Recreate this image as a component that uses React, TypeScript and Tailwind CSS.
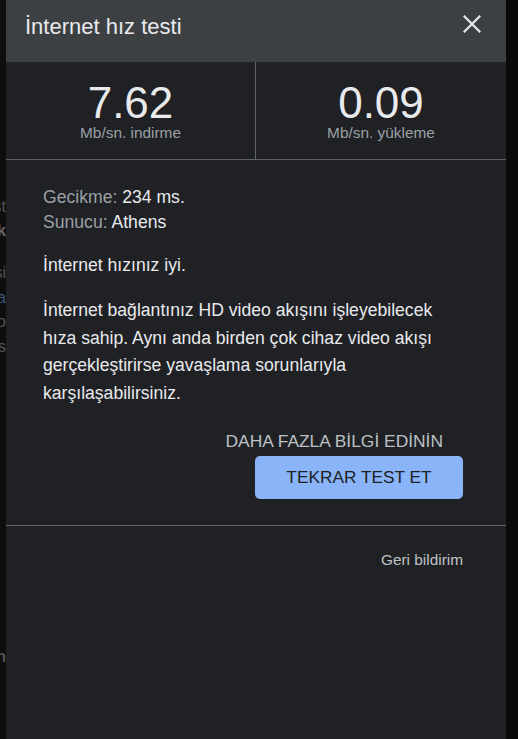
import React from "react";

const font = { fontFamily: '"Liberation Sans", Arial, sans-serif' };

function CloseIcon() {
  return (
    <svg width="18" height="18" viewBox="0 0 18 18" className="mt-[2px] shrink-0">
      <path d="M1.5 1.5 L16.5 16.5 M16.5 1.5 L1.5 16.5" stroke="#e8eaed" strokeWidth="2.2" strokeLinecap="square" />
    </svg>
  );
}

function Stat({ value, label, divider }: { value: string; label: string; divider?: boolean }) {
  return (
    <div className={`w-1/2 flex flex-col items-center pt-[19px] ${divider ? "border-r border-[#5f6368]" : ""}`}>
      <div className="text-[44px] leading-[44px] text-[#e8eaed]">{value}</div>
      <div className="text-[15.4px] leading-[15px] text-[#9aa0a6]">{label}</div>
    </div>
  );
}

export default function App() {
  return (
    <div className="flex h-[739px] w-[518px] overflow-hidden bg-[#0e0e0f]" style={font}>
      {/* page behind the dialog, only the cut-off edge shows */}
      <div className="w-[6px] shrink-0 overflow-hidden text-[16px] text-[#505357]">
        <div className="flex flex-col items-end pt-[195px] leading-[24px]">
          <div className="h-[24px] whitespace-nowrap">st</div>
          <div className="h-[42px] whitespace-nowrap font-bold text-[#64676a]">ok</div>
          <div className="h-[25px] whitespace-nowrap">desi</div>
          <div className="h-[24px] whitespace-nowrap text-[#3e5577]">ıkta</div>
          <div className="h-[25px] whitespace-nowrap">bo</div>
          <div className="h-[24px] whitespace-nowrap">ras</div>
          <div className="mt-[286px] h-[24px] whitespace-nowrap font-bold">an</div>
        </div>
      </div>

      <div className="flex w-[500px] shrink-0 flex-col bg-[#202124]">
        <div className="flex h-[62px] items-start justify-between bg-[#3c4043] pl-[19px] pr-[25px] pt-[13px]">
          <div className="text-[22px] leading-[28px] text-[#e8eaed]">İnternet hız testi</div>
          <CloseIcon />
        </div>

        <div className="flex h-[98px] border-b border-[#5f6368]">
          <Stat value="7.62" label="Mb/sn. indirme" divider />
          <Stat value="0.09" label="Mb/sn. yükleme" />
        </div>

        <div className="flex flex-col border-b border-[#5f6368] pb-[26px] pl-[37px] pr-[43px] pt-[25px] text-[17.6px] text-[#e8eaed]">
          <div className="leading-[24.5px]">
            <div>
              <span className="text-[#9aa0a6]">Gecikme: </span>234 ms.
            </div>
            <div>
              <span className="text-[#9aa0a6]">Sunucu: </span>Athens
            </div>
          </div>
          <p className="mt-[18px] leading-[27.5px]">İnternet hızınız iyi.</p>
          <p className="mt-[17.5px] leading-[27.5px]">
            İnternet bağlantınız HD video akışını işleyebilecek hıza sahip. Aynı anda birden çok cihaz video akışı
            gerçekleştirirse yavaşlama sorunlarıyla karşılaşabilirsiniz.
          </p>
          <div className="mt-[22px] mr-[20px] self-end text-[17.4px] leading-[24px] text-[#bdc1c6]">
            DAHA FAZLA BİLGİ EDİNİN
          </div>
          <button className="mt-[3px] flex h-[43px] w-[208px] items-center justify-center self-end rounded-[5px] bg-[#8ab4f8] text-[17.3px] text-[#202124]">
            TEKRAR TEST ET
          </button>
        </div>

        <div className="flex justify-end pr-[43px] pt-[24px]">
          <span className="text-[15.4px] leading-[20px] text-[#bdc1c6]">Geri bildirim</span>
        </div>
      </div>

      <div className="w-[12px] shrink-0 bg-[#0a0a0a]" />
    </div>
  );
}
